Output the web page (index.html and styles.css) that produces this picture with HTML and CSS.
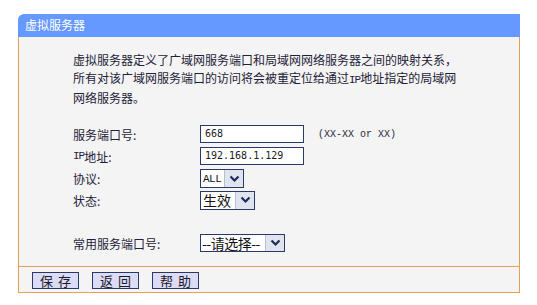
FILE: index.html
```html
<!DOCTYPE html>
<html lang="zh-CN">
<head>
<meta charset="utf-8">
<title>虚拟服务器</title>
<link rel="stylesheet" href="styles.css">
</head>
<body>
<div class="box">
  <div class="head">虚拟服务器</div>
  <div class="panel">
    <p class="desc">虚拟服务器定义了广域网服务端口和局域网网络服务器之间的映射关系，<br>所有对该广域网服务端口的访问将会被重定位给通过<span class="ip">IP</span>地址指定的局域网<br>网络服务器。</p>
    <div class="form">
      <div class="label">服务端口号:</div>
      <div class="field"><span class="input">668</span><span class="hint">(XX-XX or XX)</span></div>
      <div class="label"><span class="ip">IP</span>地址:</div>
      <div class="field"><span class="input">192.168.1.129</span></div>
      <div class="label">协议:</div>
      <div class="field"><span class="select sel-all"><span class="val mono">ALL</span><span class="arrow"><svg width="11" height="8" viewBox="0 0 11 8"><path d="M1.5 1.5 L5.5 5.5 L9.5 1.5" fill="none" stroke="#1c2c5c" stroke-width="2.2"/></svg></span></span></div>
      <div class="label">状态:</div>
      <div class="field"><span class="select sel-state"><span class="val big">生效</span><span class="arrow"><svg width="11" height="8" viewBox="0 0 11 8"><path d="M1.5 1.5 L5.5 5.5 L9.5 1.5" fill="none" stroke="#1c2c5c" stroke-width="2.2"/></svg></span></span></div>
      <div class="spacer"></div>
      <div class="spacer"></div>
      <div class="label">常用服务端口号:</div>
      <div class="field"><span class="select sel-common"><span class="val big">--请选择--</span><span class="arrow"><svg width="11" height="8" viewBox="0 0 11 8"><path d="M1.5 1.5 L5.5 5.5 L9.5 1.5" fill="none" stroke="#1c2c5c" stroke-width="2.2"/></svg></span></span></div>
    </div>
  </div>
  <div class="foot">
    <button class="btn">保 存</button>
    <button class="btn">返 回</button>
    <button class="btn">帮 助</button>
  </div>
</div>
</body>
</html>
```

FILE: styles.css
```css
html, body {
  margin: 0;
  padding: 0;
  background: #ffffff;
}
body {
  font-family: "Noto Sans CJK SC", "Liberation Sans", sans-serif;
  font-size: 12px;
  color: #1e2238;
}
.box {
  margin: 14px 0 0 18px;
  width: 502px;
}
.head {
  height: 23px;
  line-height: 22px;
  background: #6699ff;
  color: #ffffff;
  padding-left: 7px;
  border-top-left-radius: 6px;
  font-size: 12px;
}
.panel {
  background: #f4f4f4;
  border-left: 1px solid #e6a052;
  border-right: 1px solid #e6a052;
  padding: 14px 0 12px 54px;
}
.desc {
  margin: 0;
  line-height: 18px;
  white-space: nowrap;
  font-size: 12px;
}
.ip {
  font-family: "Liberation Mono", monospace;
  font-size: 11px;
  letter-spacing: -1px;
}
.form {
  margin-top: 16px;
  display: grid;
  grid-template-columns: 127px auto;
  grid-template-rows: 22px 22px 23px 20px 22px 22px;
}
.label {
  display: flex;
  align-items: center;
  white-space: nowrap;
}
.field {
  display: flex;
  align-items: center;
}
.input {
  box-sizing: border-box;
  width: 104px;
  height: 18px;
  border: 1px solid #2a3a68;
  background: #ffffff;
  font-family: "DejaVu Sans Mono", monospace;
  font-size: 10px;
  line-height: 16px;
  padding-left: 4px;
  color: #1a1a1a;
}
.hint {
  margin-left: 14px;
  font-family: "Liberation Mono", monospace;
  font-size: 10px;
  color: #2a2a3a;
}
.select {
  box-sizing: border-box;
  display: flex;
  height: 19px;
  border: 1px solid #2a3a68;
  background: #ffffff;
}
.val {
  flex: 1;
  display: flex;
  align-items: center;
  padding-left: 2px;
  color: #111111;
  white-space: nowrap;
}
.mono {
  font-family: "Liberation Mono", monospace;
  font-size: 11px;
  letter-spacing: -0.5px;
}
.big {
  font-size: 14px;
  line-height: 17px;
}
.arrow {
  width: 18px;
  display: flex;
  align-items: center;
  justify-content: center;
  background: #dfe4ee;
  border-left: 1px solid #b8c0d0;
}
.sel-all { width: 44px; }
.sel-state { width: 55px; }
.sel-common { width: 85px; height: 18px; }
.sel-common .val { padding-left: 1px; letter-spacing: -0.5px; }
.foot {
  background: #f4f4f4;
  border: 1px solid #e6a052;
  border-bottom-width: 1px;
  height: 24px;
  padding: 5px 0 0 13px;
  display: flex;
  align-items: flex-start;
  gap: 13px;
  box-sizing: border-box;
  height: 27px;
}
.btn {
  width: 47px;
  height: 17px;
  padding: 0;
  margin: 0;
  border: 1px solid #2a3a68;
  background: #dcdcf6;
  font-family: "Noto Sans CJK SC", sans-serif;
  font-size: 13px;
  line-height: 15px;
  color: #1a1a2a;
  word-spacing: 2px;
}
```
